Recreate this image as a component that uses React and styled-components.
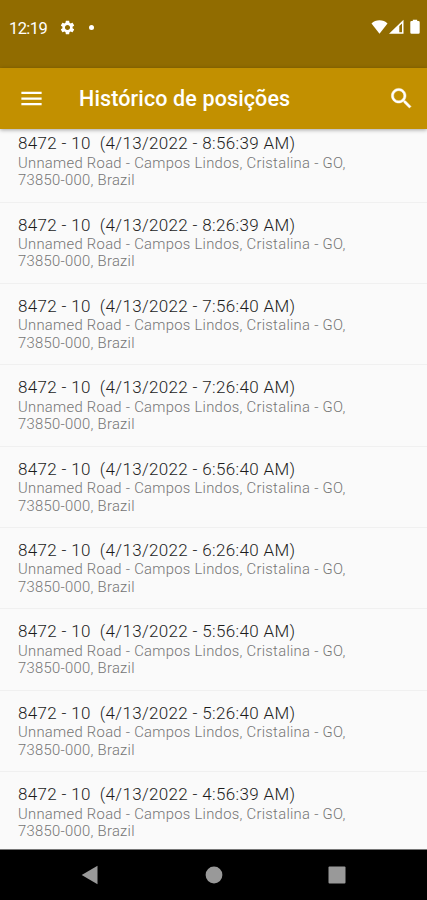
import styled, { createGlobalStyle } from 'styled-components';

const address = {
  street: 'Unnamed Road - Campos Lindos, Cristalina - GO,',
  zip: '73850-000, Brazil',
};

const positions = [
  '8:56:39 AM',
  '8:26:39 AM',
  '7:56:40 AM',
  '7:26:40 AM',
  '6:56:40 AM',
  '6:26:40 AM',
  '5:56:40 AM',
  '5:26:40 AM',
  '4:56:39 AM',
].map((time) => ({ vehicle: '8472 - 10', date: '4/13/2022', time, ...address }));

const StatusBar = () => (
  <SCStatusBar>
    <span className="status__clock">12:19</span>
    <svg className="status__gear" width="17" height="17" viewBox="0 0 24 24">
      <path
        fill="#fff"
        d="M19.14 12.94c.04-.3.06-.61.06-.94 0-.32-.02-.64-.07-.94l2.03-1.58c.18-.14.23-.41.12-.61l-1.92-3.32c-.12-.22-.37-.29-.59-.22l-2.39.96c-.5-.38-1.03-.7-1.62-.94l-.36-2.54c-.04-.24-.24-.41-.48-.41h-3.84c-.24 0-.43.17-.47.41l-.36 2.54c-.59.24-1.13.57-1.62.94l-2.39-.96c-.22-.08-.47 0-.59.22L2.74 8.87c-.12.21-.08.47.12.61l2.03 1.58c-.05.3-.09.63-.09.94s.02.64.07.94l-2.03 1.58c-.18.14-.23.41-.12.61l1.92 3.32c.12.22.37.29.59.22l2.39-.96c.5.38 1.03.7 1.62.94l.36 2.54c.05.24.24.41.48.41h3.84c.24 0 .44-.17.47-.41l.36-2.54c.59-.24 1.13-.56 1.62-.94l2.39.96c.22.08.47 0 .59-.22l1.92-3.32c.12-.22.07-.47-.12-.61l-2.01-1.58zM12 15.6c-1.98 0-3.6-1.62-3.6-3.6s1.62-3.6 3.6-3.6 3.6 1.62 3.6 3.6-1.62 3.6-3.6 3.6z"
      />
    </svg>
    <span className="status__dot" />
    <svg className="status__signals" width="50" height="16" viewBox="0 0 50 16">
      <path fill="#fff" d="M0.5 4.5C4.5 0.3 12.5 0.3 16.5 4.5L8.5 14.8z" />
      <path fill="#fff" fillRule="evenodd" d="M32.5 0.8V14.8H18zM31 4.5L28.3 7.1V13.3H31z" />
      <path
        fill="#fff"
        d="M41.8 0.7h4.4v1.3h1.3q1.2 0 1.2 1.2v10.3q0 1.2-1.2 1.2h-7q-1.2 0-1.2-1.2V3.2q0-1.2 1.2-1.2h1.3z"
      />
    </svg>
  </SCStatusBar>
);

const AppBar = ({ title }) => (
  <SCAppBar>
    <svg width="27" height="27" viewBox="0 0 24 24">
      <path fill="#fff" d="M3 18h18v-2H3v2zm0-5h18v-2H3v2zm0-7v2h18V6H3z" />
    </svg>
    <h1>{title}</h1>
    <svg width="27" height="27" viewBox="0 0 24 24">
      <path
        fill="#fff"
        stroke="#fff"
        strokeWidth="0.4"
        d="M15.5 14h-.79l-.28-.27C15.41 12.59 16 11.11 16 9.5 16 5.91 13.09 3 9.5 3S3 5.91 3 9.5 5.91 16 9.5 16c1.61 0 3.09-.59 4.23-1.57l.27.28v.79l5 4.99L20.49 19l-4.99-5zm-6 0C7.01 14 5 11.99 5 9.5S7.01 5 9.5 5 14 7.01 14 9.5 11.99 14 9.5 14z"
      />
    </svg>
  </SCAppBar>
);

const PositionItem = ({ vehicle, date, time, street, zip }) => (
  <SCItem>
    <div className="item__title">{`${vehicle}  (${date} - ${time})`}</div>
    <div className="item__address">{street}</div>
    <div className="item__address">{zip}</div>
  </SCItem>
);

const NavigationBar = () => (
  <SCNavigation>
    <svg width="18" height="20" viewBox="0 0 18 20">
      <path fill="#999" d="M16.5 0.7V19.3L0.7 10z" />
    </svg>
    <svg width="18" height="18" viewBox="0 0 18 18">
      <circle cx="9" cy="9" r="8.4" fill="#999" />
    </svg>
    <svg width="18" height="18" viewBox="0 0 18 18">
      <rect x="0.5" y="0.5" width="17" height="17" rx="1" fill="#999" />
    </svg>
  </SCNavigation>
);

const App = () => (
  <>
    <GlobalStyle />
    <SCScreen>
      <StatusBar />
      <AppBar title="Histórico de posições" />
      <SCViewport>
        <SCList>
          {positions.map((position) => (
            <PositionItem key={position.time} {...position} />
          ))}
        </SCList>
      </SCViewport>
      <NavigationBar />
    </SCScreen>
  </>
);

export default App;

const GlobalStyle = createGlobalStyle`
  * {
    box-sizing: border-box;
  }
  body {
    margin: 0;
    font-family: Roboto, 'Liberation Sans', sans-serif;
  }
  svg {
    display: block;
    flex-shrink: 0;
  }
`;

const SCScreen = styled.div`
  display: flex;
  flex-direction: column;
  width: 427px;
  height: 900px;
  overflow: hidden;
  background-color: #fafafa;
`;

const SCStatusBar = styled.div`
  display: flex;
  align-items: center;
  flex-shrink: 0;
  height: 68px;
  padding: 0 6px 14px 9px;
  background-color: #916c00;
  color: #fff;
  .status__clock {
    width: 50px;
    padding-top: 2px;
    font-size: 16.5px;
    letter-spacing: -0.6px;
  }
  .status__dot {
    width: 5px;
    height: 5px;
    margin-left: 12.5px;
    border-radius: 50%;
    background-color: #fff;
  }
  .status__signals {
    margin-left: auto;
  }
`;

const SCAppBar = styled.header`
  position: relative;
  display: flex;
  align-items: center;
  flex-shrink: 0;
  height: 60.5px;
  padding: 0 12px 0 17.5px;
  background-color: #c29000;
  box-shadow: 0 1px 4px rgba(0, 0, 0, 0.35);
  color: #fff;
  h1 {
    flex: 1;
    margin: 2px 0 0 34.5px;
    font-size: 21.5px;
    font-weight: 500;
    line-height: 28px;
    letter-spacing: 0.13px;
  }
`;

const SCViewport = styled.main`
  flex: 1;
  min-height: 0;
  overflow: hidden;
`;

/* scrolled a little, the first row starts under the app bar */
const SCList = styled.ul`
  margin: -7.4px 0 0;
  padding: 0;
  list-style: none;
`;

const SCItem = styled.li`
  height: 81.4px;
  padding: 12px 18px 0;
  border-bottom: 1px solid #f0f0f0;
  white-space: pre;
  .item__title {
    color: #1c1c1c;
    font-size: 17px;
    font-weight: 300;
    line-height: 21px;
    letter-spacing: 0.34px;
  }
  .item__address {
    color: #757575;
    font-size: 14.8px;
    font-weight: 300;
    line-height: 17.5px;
    letter-spacing: 0.29px;
  }
  .item__title + .item__address {
    padding-top: 0.4px;
  }
`;

const SCNavigation = styled.nav`
  display: flex;
  align-items: center;
  justify-content: space-between;
  flex-shrink: 0;
  height: 51.5px;
  padding: 0 81px;
  border-top: 1px solid #777;
  background-color: #000;
`;
